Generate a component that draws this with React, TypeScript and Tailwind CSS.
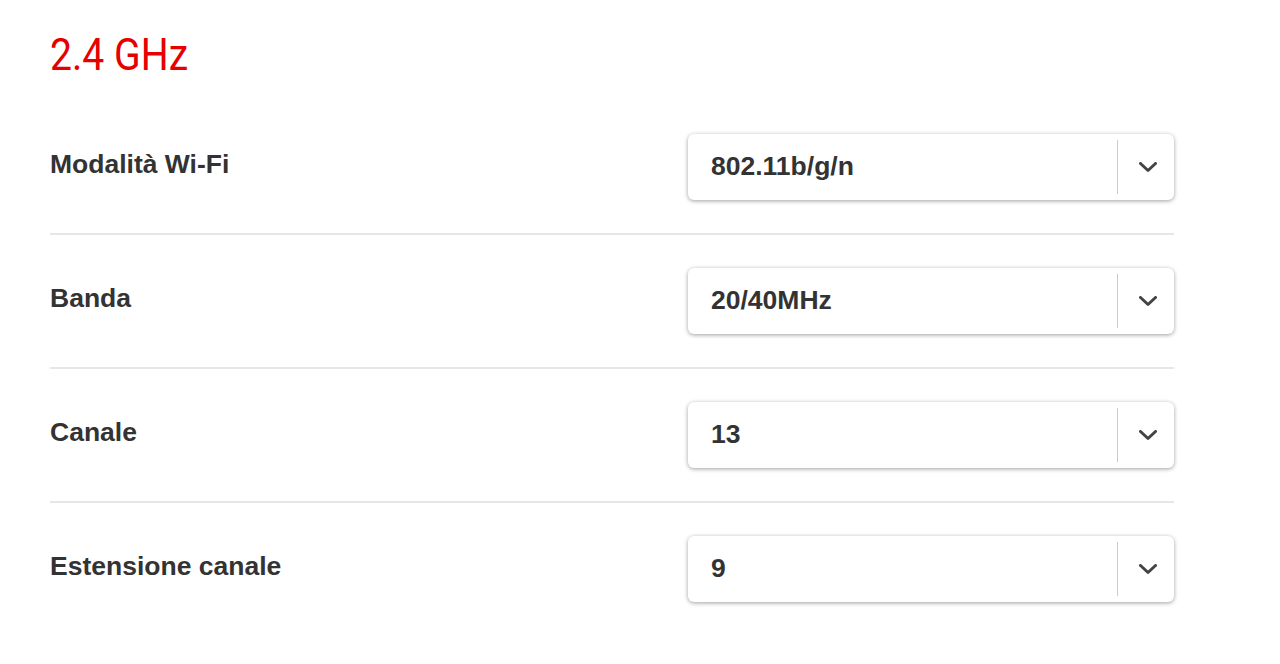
const rows = [
  { label: 'Modalità Wi-Fi', value: '802.11b/g/n' },
  { label: 'Banda', value: '20/40MHz' },
  { label: 'Canale', value: '13' },
  { label: 'Estensione canale', value: '9' },
];

function Select({ value }: { value: string }) {
  return (
    <div className="flex h-[66px] w-[486px] items-center rounded-[6px] bg-white shadow-[0_1px_4px_rgba(0,0,0,0.38)]">
      <div className="flex-1 pl-[23px] text-[26.5px] font-bold text-[#333333]">{value}</div>
      <div className="h-[54px] w-px bg-[#cccccc]" />
      <div className="flex w-[56px] items-center justify-center pl-[3px]">
        <svg width="18" height="11" viewBox="0 0 18 11" fill="none">
          <polyline points="1.5,1.5 9,8.5 16.5,1.5" stroke="#444444" strokeWidth="3" strokeLinecap="round" strokeLinejoin="round" />
        </svg>
      </div>
    </div>
  );
}

export default function App() {
  return (
    <main className="min-h-screen bg-white px-[50px] font-['Liberation_Sans',Arial,sans-serif]">
      <div className="w-[1124px]">
        <h1 className="pt-[33px]">
          <span className="block w-fit origin-left scale-x-[0.89] font-['Roboto',sans-serif] text-[44px] font-normal leading-[44px] text-[#e60000]">
            2.4 GHz
          </span>
        </h1>
        <div className="pt-[24px]">
          {rows.map((row, i) => (
            <div
              key={row.label}
              className={
                'flex items-center justify-between py-[33px] ' +
                (i < rows.length - 1 ? 'border-b-2 border-[#e6e6e6]' : '')
              }
            >
              <div className="-mt-[4px] text-[26.5px] font-bold text-[#333333]">{row.label}</div>
              <Select value={row.value} />
            </div>
          ))}
        </div>
      </div>
    </main>
  );
}
